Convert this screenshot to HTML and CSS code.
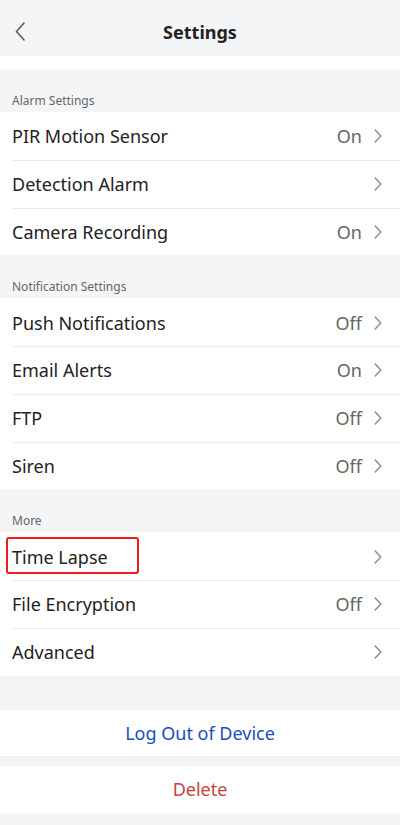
FILE: index.html
```html
<!DOCTYPE html>
<html lang="en">
<head>
<meta charset="utf-8">
<title>Settings</title>
<link rel="stylesheet" href="styles.css">
</head>
<body>
<div class="page">
  <header class="topbar">
    <span class="back">
      <svg width="10" height="19" viewBox="0 0 10 19"><path d="M9 1 L1.5 9.5 L9 18" fill="none" stroke="#5b5b60" stroke-width="1.6" stroke-linecap="round" stroke-linejoin="round"/></svg>
    </span>
    <h1 class="title">Settings</h1>
    <span></span>
  </header>

  <div class="clip">
    <div class="row"><div class="row-body"><span class="name">Night Vision</span></div></div>
  </div>

  <div class="group-label">Alarm Settings</div>
  <section class="group">
    <div class="row"><div class="row-body"><span class="name">PIR Motion Sensor</span><span class="value">On</span><svg class="chev" width="8" height="14" viewBox="0 0 8 14"><path d="M1.2 1 L6.8 7 L1.2 13" /></svg></div></div>
    <div class="row"><div class="row-body"><span class="name">Detection Alarm</span><span class="value"></span><svg class="chev" width="8" height="14" viewBox="0 0 8 14"><path d="M1.2 1 L6.8 7 L1.2 13" /></svg></div></div>
    <div class="row"><div class="row-body"><span class="name">Camera Recording</span><span class="value">On</span><svg class="chev" width="8" height="14" viewBox="0 0 8 14"><path d="M1.2 1 L6.8 7 L1.2 13" /></svg></div></div>
  </section>

  <div class="group-label">Notification Settings</div>
  <section class="group">
    <div class="row"><div class="row-body"><span class="name">Push Notifications</span><span class="value">Off</span><svg class="chev" width="8" height="14" viewBox="0 0 8 14"><path d="M1.2 1 L6.8 7 L1.2 13" /></svg></div></div>
    <div class="row"><div class="row-body"><span class="name">Email Alerts</span><span class="value">On</span><svg class="chev" width="8" height="14" viewBox="0 0 8 14"><path d="M1.2 1 L6.8 7 L1.2 13" /></svg></div></div>
    <div class="row"><div class="row-body"><span class="name">FTP</span><span class="value">Off</span><svg class="chev" width="8" height="14" viewBox="0 0 8 14"><path d="M1.2 1 L6.8 7 L1.2 13" /></svg></div></div>
    <div class="row"><div class="row-body"><span class="name">Siren</span><span class="value">Off</span><svg class="chev" width="8" height="14" viewBox="0 0 8 14"><path d="M1.2 1 L6.8 7 L1.2 13" /></svg></div></div>
  </section>

  <div class="group-label">More</div>
  <section class="group">
    <div class="row highlighted"><div class="row-body"><span class="name">Time Lapse</span><span class="value"></span><svg class="chev" width="8" height="14" viewBox="0 0 8 14"><path d="M1.2 1 L6.8 7 L1.2 13" /></svg></div><span class="mark"></span></div>
    <div class="row"><div class="row-body"><span class="name">File Encryption</span><span class="value">Off</span><svg class="chev" width="8" height="14" viewBox="0 0 8 14"><path d="M1.2 1 L6.8 7 L1.2 13" /></svg></div></div>
    <div class="row"><div class="row-body"><span class="name">Advanced</span><span class="value"></span><svg class="chev" width="8" height="14" viewBox="0 0 8 14"><path d="M1.2 1 L6.8 7 L1.2 13" /></svg></div></div>
  </section>

  <div class="actions">
    <button class="action logout" type="button">Log Out of Device</button>
    <button class="action delete" type="button">Delete</button>
  </div>
</div>
</body>
</html>
```

FILE: styles.css
```css
* { box-sizing: border-box; }

html, body {
  margin: 0;
  padding: 0;
  background: #f4f5f7;
}

body {
  font-family: "Noto Sans", Roboto, "Liberation Sans", sans-serif;
  color: #222;
  width: 400px;
  height: 825px;
  overflow: hidden;
}

.topbar {
  height: 56px;
  display: grid;
  grid-template-columns: 60px 1fr 60px;
  align-items: center;
}

.back {
  display: flex;
  align-items: center;
  padding-left: 15px;
  padding-top: 7px;
  height: 56px;
}

.title {
  margin: 0;
  text-align: center;
  font-size: 18px;
  line-height: 24px;
  font-weight: 700;
  color: #222;
  padding-top: 8px;
}

.clip {
  height: 13px;
  overflow: hidden;
  background: #fff;
  display: flex;
  flex-direction: column;
  justify-content: flex-end;
}

.clip .row { flex: 0 0 48px; }

.group-label {
  height: 43px;
  display: flex;
  align-items: flex-end;
  padding: 0 12px 3.5px;
  font-size: 12px;
  line-height: 16px;
  color: #666;
}

.group {
  background: #fff;
}

.row {
  position: relative;
  padding-left: 12px;
  background: #fff;
}

.row-body {
  height: 47.75px;
  display: flex;
  align-items: center;
  padding-right: 18px;
  padding-top: 1px;
  font-size: 18px;
  line-height: 24px;
}

.row + .row .row-body {
  border-top: 1px solid #ebebee;
  padding-top: 0;
}

.name {
  flex: 1;
  color: #222;
}

.value {
  color: #666;
  margin-right: 12px;
}

.chev {
  display: block;
  fill: none;
  stroke: #8d8c9c;
  stroke-width: 1.5;
  stroke-linecap: round;
  stroke-linejoin: round;
}

.mark {
  position: absolute;
  left: 6px;
  top: 5px;
  width: 133px;
  height: 37px;
  border: 2px solid #ee1c1c;
  border-radius: 3px;
}

.actions {
  padding-top: 34px;
  display: flex;
  flex-direction: column;
}

.action {
  display: block;
  width: 100%;
  height: 47px;
  border: 0;
  background: #fff;
  font-family: inherit;
  font-size: 18px;
  padding: 0 0 1px;
  cursor: pointer;
}

.logout {
  color: #1a4cbf;
  box-shadow: inset 0 -1px 0 #f0f0f2;
  margin-bottom: 9.5px;
}

.delete {
  color: #c8423b;
}
```
